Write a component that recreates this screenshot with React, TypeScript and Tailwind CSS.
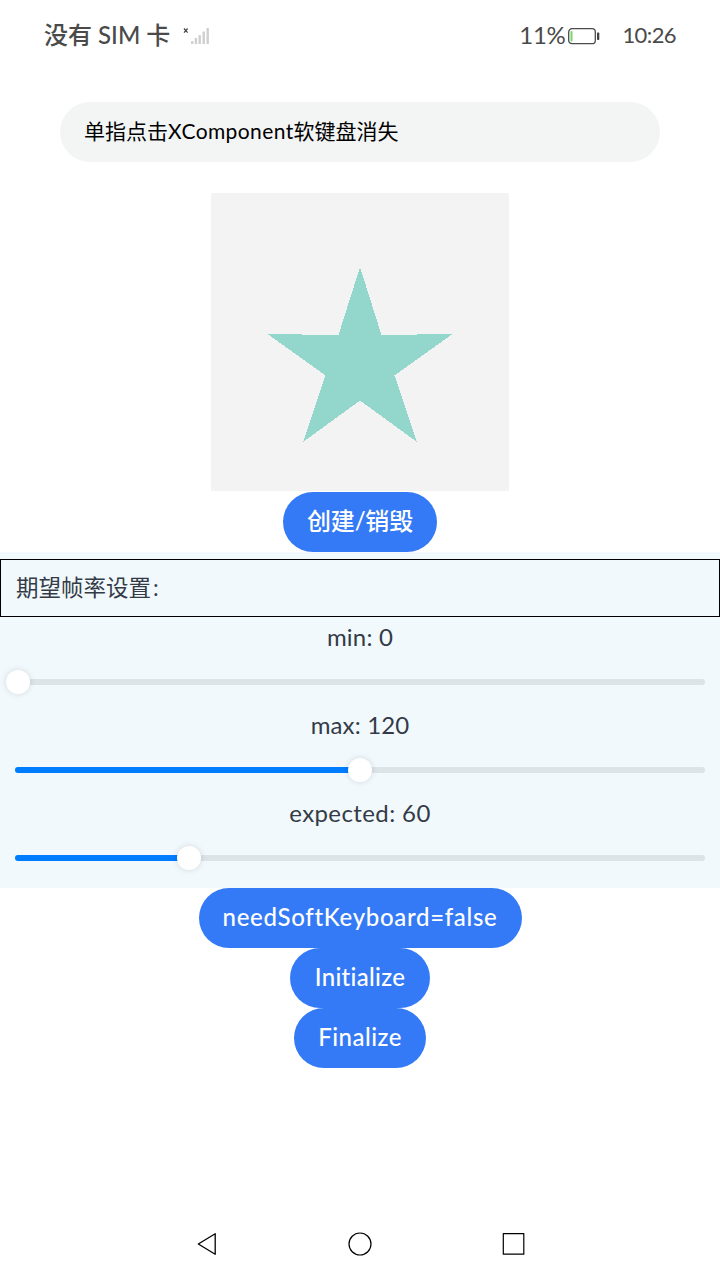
import React from "react";

type SliderProps = { label: string; labelClass: string; min: number; max: number; value: number };

function FrameSlider({ label, labelClass, min, max, value }: SliderProps) {
  const ratio = (value - min) / (max - min);
  const center = 3 + ratio * 684;
  return (
    <div className="flex flex-col">
      <div className="flex h-7 items-center justify-center whitespace-pre pb-0.5 text-2xl leading-7 text-[#343b47]">
        <span className={labelClass}>{label}</span>
      </div>
      <div className="flex h-[60px] items-center px-[15px]">
        <div className="relative h-1.5 w-full rounded-full bg-[#dce4e7]">
          <div
            className="h-full rounded-full bg-[#007dff]"
            style={{ width: ratio === 0 ? 0 : center }}
          />
          <div
            className="absolute -top-[9px] h-6 w-6 -translate-x-1/2 rounded-full bg-white shadow-[0_0_6px_rgba(0,0,0,0.13)]"
            style={{ left: center }}
          />
        </div>
      </div>
    </div>
  );
}

function PillButton({ className, textClass, children }: { className: string; textClass: string; children: string }) {
  return (
    <button className={`flex h-[60px] shrink-0 items-center justify-center whitespace-nowrap rounded-full bg-[#347af6] pb-0.5 text-2xl font-medium text-white ${className}`}>
      <span className={textClass}>{children}</span>
    </button>
  );
}

function StatusBar() {
  return (
    <header className="flex h-[72px] shrink-0 items-center pl-11 pr-[44px] text-[#4a4a4a]">
      <span className="w-[138px] whitespace-nowrap pb-0.5 text-2xl font-medium">没有 SIM 卡</span>
      <svg width="30" height="22" viewBox="0 0 30 22" fill="none">
        <path d="M2 3.5l3.6 4.2M5.6 3.5L2 7.700" stroke="#444" strokeWidth="1.2" />
        <g fill="#cfcfcf">
          <rect x="9" y="16" width="2.400" height="3" rx="0.500" />
          <rect x="12.700" y="13" width="2.400" height="6" rx="0.500" />
          <rect x="16.500" y="10" width="2.400" height="9" rx="0.500" />
          <rect x="20.500" y="6.500" width="2.400" height="12.500" rx="0.500" />
          <rect x="24.500" y="3" width="2.400" height="16" rx="0.500" />
        </g>
      </svg>
      <div className="ml-auto flex items-center">
        <span className="pb-0.5 text-2xl tracking-[-0.3px]">11%</span>
        <svg className="ml-[2px]" width="34" height="18" viewBox="0 0 34 18" fill="none">
          <rect x="1.700" y="1.700" width="26.600" height="15" rx="3.300" stroke="#4c4c4c" strokeWidth="1.300" />
          <rect x="3.500" y="4" width="2" height="10.500" rx="0.800" fill="#78d56b" />
          <rect x="30" y="5.500" width="2.300" height="7.500" rx="0.700" fill="#444" />
        </svg>
        <span className="ml-[21px] pb-[3px] text-[22px] tracking-[-0.6px]">10:26</span>
      </div>
    </header>
  );
}

export default function App() {
  return (
    <div className="flex h-[1280px] w-[720px] flex-col overflow-hidden bg-white font-['Lato','Noto_Sans_CJK_SC',sans-serif] [font-variant-ligatures:none]">
      <StatusBar />
      <main className="flex flex-1 flex-col items-center">
        <div className="mt-[30px] flex h-[60px] w-[600px] shrink-0 items-center rounded-full bg-[#f3f5f5] px-6 pb-0.5 text-[21px] text-black">
          <span className="whitespace-nowrap">单指点击<span className="tracking-[0.4px]">XComponent</span>软键盘消失</span>
        </div>
        <div className="mt-[31px] h-[298px] w-[298px] shrink-0 bg-[#f3f3f3]">
          <svg width="298" height="298" viewBox="0 0 298 298" shapeRendering="crispEdges">
            <path
              d="M149 74L170.500 142H206V141H241.500L183.500 182.500L206 249L149 207.500L92 249L114.500 182.500L56.500 141H91V142H127.500Z"
              fill="#92d6cc"
            />
          </svg>
        </div>
        <PillButton className="mt-px w-[154px]" textClass="tracking-[-0.2px]">创建/销毁</PillButton>
        <section className="flex w-full shrink-0 flex-col bg-[#f1f9fd] pt-[7px]">
          <div className="mb-[7px] flex h-[58px] items-center border border-black px-[15px] text-[22.5px] text-[#343b47]">
            期望帧率设置<span className="pl-0.5">:</span>
          </div>
          <FrameSlider label="min: 0" labelClass="tracking-[0.2px]" min={0} max={240} value={0} />
          <FrameSlider label="max: 120" labelClass="tracking-[0.15px]" min={0} max={240} value={120} />
          <FrameSlider label="expected: 60" labelClass="tracking-[0.4px]" min={0} max={240} value={60} />
        </section>
        <PillButton className="w-[323px]" textClass="tracking-[0.68px]">needSoftKeyboard=false</PillButton>
        <PillButton className="w-[140px]" textClass="tracking-[0.3px]">Initialize</PillButton>
        <PillButton className="w-[132px]" textClass="tracking-[0.5px]">Finalize</PillButton>
      </main>
      <nav className="flex h-[72px] shrink-0 items-center justify-center gap-[129px]">
        <svg width="24" height="24" viewBox="0 0 24 24" fill="none" stroke="black" strokeWidth="1.300" strokeLinejoin="round">
          <path d="M3.300 12L20.200 1.700V22.300Z" />
        </svg>
        <svg width="24" height="24" viewBox="0 0 24 24" fill="none" stroke="black" strokeWidth="1.200">
          <circle cx="12" cy="12" r="11" />
        </svg>
        <svg width="24" height="24" viewBox="0 0 24 24" fill="none" stroke="black" strokeWidth="1.200" strokeLinejoin="round">
          <rect x="2.300" y="1.700" width="20.500" height="20.500" />
        </svg>
      </nav>
    </div>
  );
}
